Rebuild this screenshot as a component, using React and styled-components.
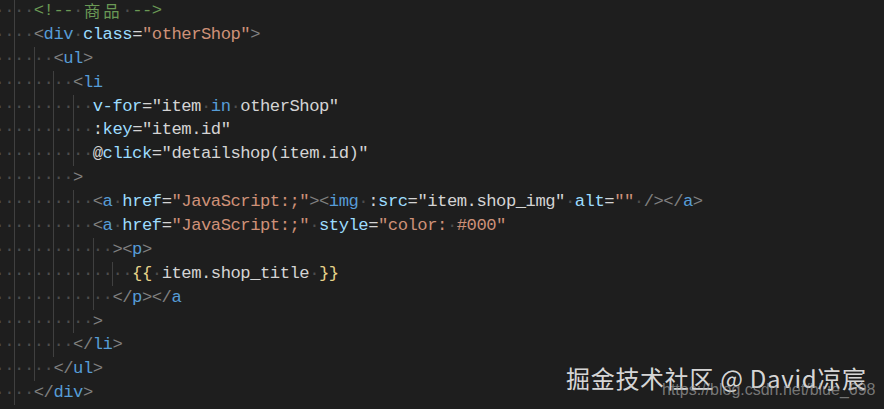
import React from 'react';
import styled, { createGlobalStyle } from 'styled-components';

const GlobalStyle = createGlobalStyle`
  html, body {
    margin: 0;
    padding: 0;
    background: #1e1e1e;
  }
`;

const colors = {
  p: '#808080',
  t: '#569cd6',
  a: '#9cdcfe',
  s: '#ce9178',
  c: '#6a9955',
  d: '#d4d4d4',
  k: '#569cd6',
  y: '#e8d38a',
};

// one column of the editor grid, in px
const COL = 9.84;

const Editor = styled.div`
  position: relative;
  width: 884px;
  height: 409px;
  overflow: hidden;
  background: #1e1e1e;
`;

const Code = styled.div`
  margin: -1px 0 0 -5.6px;
  font-family: "Liberation Mono", "DejaVu Sans Mono", monospace;
  font-size: 17.2px;
  letter-spacing: -0.48px;
`;

const Line = styled.div`
  display: flex;
  height: 23.9px;
  line-height: 23.9px;
  white-space: pre;
`;

const Indent = styled.span`
  display: inline-block;
  width: ${COL * 2}px;
  color: #4d4d4d;
  box-shadow: ${p => (p.$guide ? 'inset 1px 0 0 #404040' : 'none')};
`;

const Token = styled.span`
  color: ${p => colors[p.$kind]};
`;

const Dot = styled.span`
  color: #4d4d4d;
`;

const Wide = styled.span`
  display: inline-block;
  width: ${COL * 4}px;
  padding-left: 1px;
  box-sizing: border-box;
  font-family: "Noto Sans CJK SC", sans-serif;
  font-size: 16.4px;
  letter-spacing: 3px;
  color: ${colors.c};
`;

const Mark = styled.div`
  position: absolute;
  left: 566px;
  top: 366px;
  font-family: "Noto Sans CJK SC", "Noto Sans", sans-serif;
  font-size: 24px;
  line-height: 24px;
  letter-spacing: 0.7px;
  color: rgba(240, 240, 240, 0.9);
  white-space: pre;
`;

const Url = styled.div`
  position: absolute;
  left: 662px;
  top: 382px;
  font-family: "Liberation Sans", Arial, sans-serif;
  font-size: 16px;
  line-height: 16px;
  color: rgba(170, 170, 170, 0.65);
  white-space: pre;
`;

const lines = [
  [4, [['c', '<!-- '], ['w', '商品'], ['c', ' -->']]],
  [4, [['p', '<'], ['t', 'div'], ['d', ' '], ['a', 'class'], ['d', '='], ['s', '"otherShop"'], ['p', '>']]],
  [6, [['p', '<'], ['t', 'ul'], ['p', '>']]],
  [8, [['p', '<'], ['t', 'li']]],
  [10, [['a', 'v-for'], ['d', '="item '], ['k', 'in'], ['d', ' otherShop"']]],
  [10, [['d', ':'], ['a', 'key'], ['d', '="item.id"']]],
  [10, [['d', '@'], ['a', 'click'], ['d', '="detailshop(item.id)"']]],
  [8, [['p', '>']]],
  [10, [['p', '<'], ['t', 'a'], ['d', ' '], ['a', 'href'], ['d', '='], ['s', '"JavaScript:;"'], ['p', '><'], ['t', 'img'], ['d', ' :'], ['a', 'src'], ['d', '="item.shop_img" '], ['a', 'alt'], ['d', '='], ['s', '""'], ['d', ' '], ['p', '/></'], ['t', 'a'], ['p', '>']]],
  [10, [['p', '<'], ['t', 'a'], ['d', ' '], ['a', 'href'], ['d', '='], ['s', '"JavaScript:;"'], ['d', ' '], ['a', 'style'], ['d', '='], ['s', '"color: #000"']]],
  [12, [['p', '><'], ['t', 'p'], ['p', '>']]],
  [14, [['y', '{{'], ['d', ' item.shop_title '], ['y', '}}']]],
  [12, [['p', '</'], ['t', 'p'], ['p', '></'], ['t', 'a']]],
  [10, [['p', '>']]],
  [8, [['p', '</'], ['t', 'li'], ['p', '>']]],
  [6, [['p', '</'], ['t', 'ul'], ['p', '>']]],
  [4, [['p', '</'], ['t', 'div'], ['p', '>']]],
];

const renderToken = ([kind, text], key) => {
  if (kind === 'w') return <Wide key={key}>{text}</Wide>;
  return text.split(/( +)/).filter(Boolean).map((part, i) =>
    part[0] === ' '
      ? <Dot key={`${key}-${i}`}>{'·'.repeat(part.length)}</Dot>
      : <Token key={`${key}-${i}`} $kind={kind}>{part}</Token>
  );
};

export default function App() {
  return (
    <Editor>
      <GlobalStyle />
      <Code>
        {lines.map(([indent, tokens], n) => (
          <Line key={n}>
            {Array.from({ length: indent / 2 }).map((_, u) => (
              <Indent key={u} $guide={u > 0}>··</Indent>
            ))}
            {tokens.map((tk, i) => renderToken(tk, i))}
          </Line>
        ))}
      </Code>
      <Mark>掘金技术社区 @ David凉宸</Mark>
      <Url>https://blog.csdn.net/blue_698</Url>
    </Editor>
  );
}
